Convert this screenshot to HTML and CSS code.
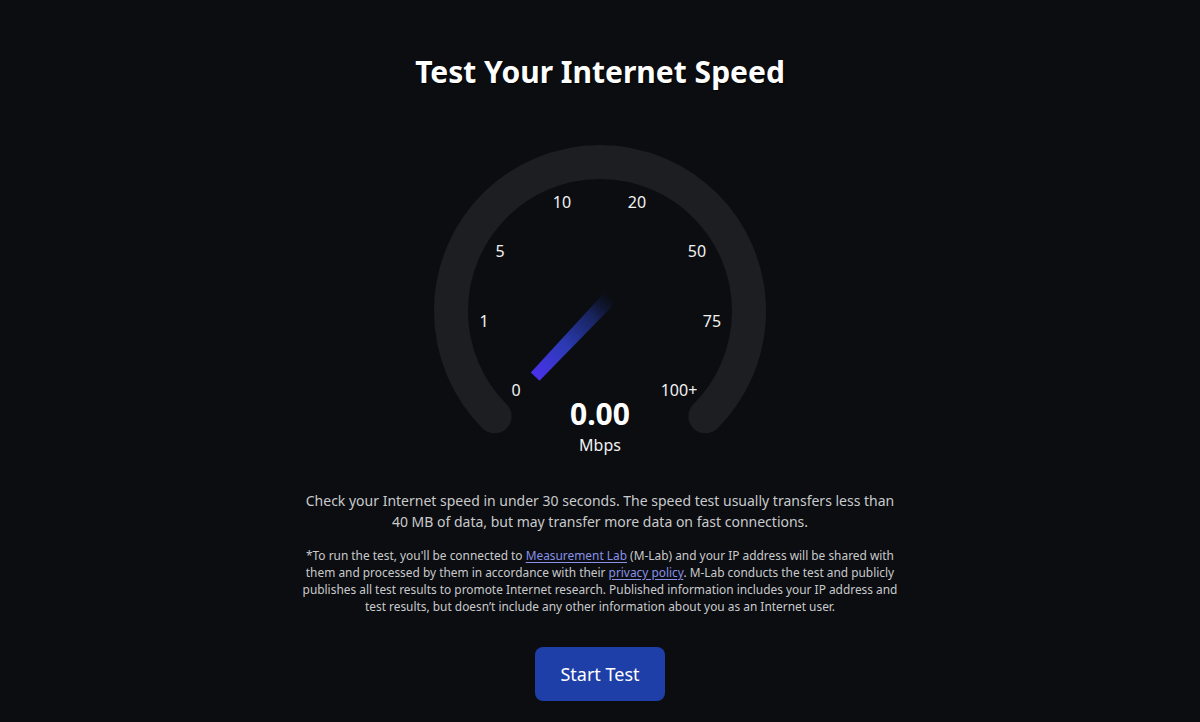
FILE: index.html
```html
<!DOCTYPE html>
<html lang="en">
<head>
<meta charset="utf-8">
<title>Test Your Internet Speed</title>
<link rel="stylesheet" href="styles.css">
</head>
<body>
<main class="page">
  <h1 class="title">Test Your Internet Speed</h1>
  <div class="gauge">
    <svg class="gauge-svg" width="340" height="320" viewBox="0 0 340 320">
      <defs>
        <linearGradient id="needleGrad" x1="0" y1="0" x2="1" y2="0">
          <stop offset="0" stop-color="#1c2a78" stop-opacity="0"/>
          <stop offset="0.25" stop-color="#2338a0" stop-opacity="0.55"/>
          <stop offset="0.6" stop-color="#2f3fc4" stop-opacity="0.9"/>
          <stop offset="1" stop-color="#4a31ec"/>
        </linearGradient>
      </defs>
      <path d="M 64.64 276.36 A 149 149 0 1 1 275.36 276.36" fill="none" stroke="#1c1e22" stroke-width="34" stroke-linecap="round"/>
      <g class="ticks" font-size="16" fill="#f2f2f2" text-anchor="middle" dominant-baseline="central">
        <text x="86" y="250">0</text>
        <text x="54" y="181">1</text>
        <text x="70" y="111">5</text>
        <text x="132" y="62">10</text>
        <text x="207" y="62">20</text>
        <text x="267" y="111">50</text>
        <text x="282" y="181">75</text>
        <text x="249" y="250">100+</text>
      </g>
      <g transform="translate(174,164) rotate(133.5)">
        <polygon points="-10,-7.5 100,-6 100,6 -10,7.5" fill="url(#needleGrad)"/>
      </g>
    </svg>
    <div class="readout">
      <div class="value">0.00</div>
      <div class="unit">Mbps</div>
    </div>
  </div>
  <p class="intro">Check your Internet speed in under 30 seconds. The speed test usually transfers less than 40 MB of data, but may transfer more data on fast connections.</p>
  <p class="notice">*To run the test, you'll be connected to <a href="#">Measurement Lab</a> (M-Lab) and your IP address will be shared with them and processed by them in accordance with their <a href="#">privacy policy</a>. M-Lab conducts the test and publicly publishes all test results to promote Internet research. Published information includes your IP address and test results, but doesn’t include any other information about you as an Internet user.</p>
  <button class="start-btn" type="button">Start Test</button>
</main>
</body>
</html>
```

FILE: styles.css
```css
html, body {
  margin: 0;
  padding: 0;
  background: #0b0d11;
}

body {
  font-family: "Noto Sans", "Open Sans", sans-serif;
  color: #f2f2f2;
  height: 722px;
  overflow: hidden;
}

.page {
  display: flex;
  flex-direction: column;
  align-items: center;
  padding-top: 54px;
}

.title {
  margin: 0;
  font-size: 30px;
  line-height: 36px;
  font-weight: 700;
  color: #ffffff;
  text-shadow: 1px 1px 1px #000;
}

.gauge {
  position: relative;
  width: 340px;
  height: 320px;
  margin-top: 50px;
}

.gauge-svg {
  display: block;
}

.ticks text {
  font-family: "Noto Sans", "Open Sans", sans-serif;
}

.readout {
  position: absolute;
  left: 0;
  right: 0;
  top: 256px;
  display: flex;
  flex-direction: column;
  align-items: center;
}

.value {
  font-size: 30px;
  line-height: 36px;
  font-weight: 700;
  color: #ffffff;
}

.unit {
  font-size: 16px;
  line-height: 20px;
  margin-top: 3px;
  color: #f2f2f2;
}

.intro {
  margin: 30px 0 0;
  width: 600px;
  text-align: center;
  font-size: 14px;
  line-height: 21px;
  color: #c9cacc;
}

.notice {
  margin: 15px 0 0;
  width: 610px;
  text-align: center;
  font-size: 11.9px;
  line-height: 17px;
  color: #c9cacc;
}

.notice a {
  color: #8891e6;
  text-decoration: underline;
  text-underline-offset: 2px;
}

.start-btn {
  margin-top: 32px;
  width: 130px;
  height: 54px;
  border: none;
  border-radius: 8px;
  background: #1e3ea8;
  color: #ffffff;
  font-family: "Noto Sans", "Open Sans", sans-serif;
  font-size: 18px;
  cursor: pointer;
}
```
